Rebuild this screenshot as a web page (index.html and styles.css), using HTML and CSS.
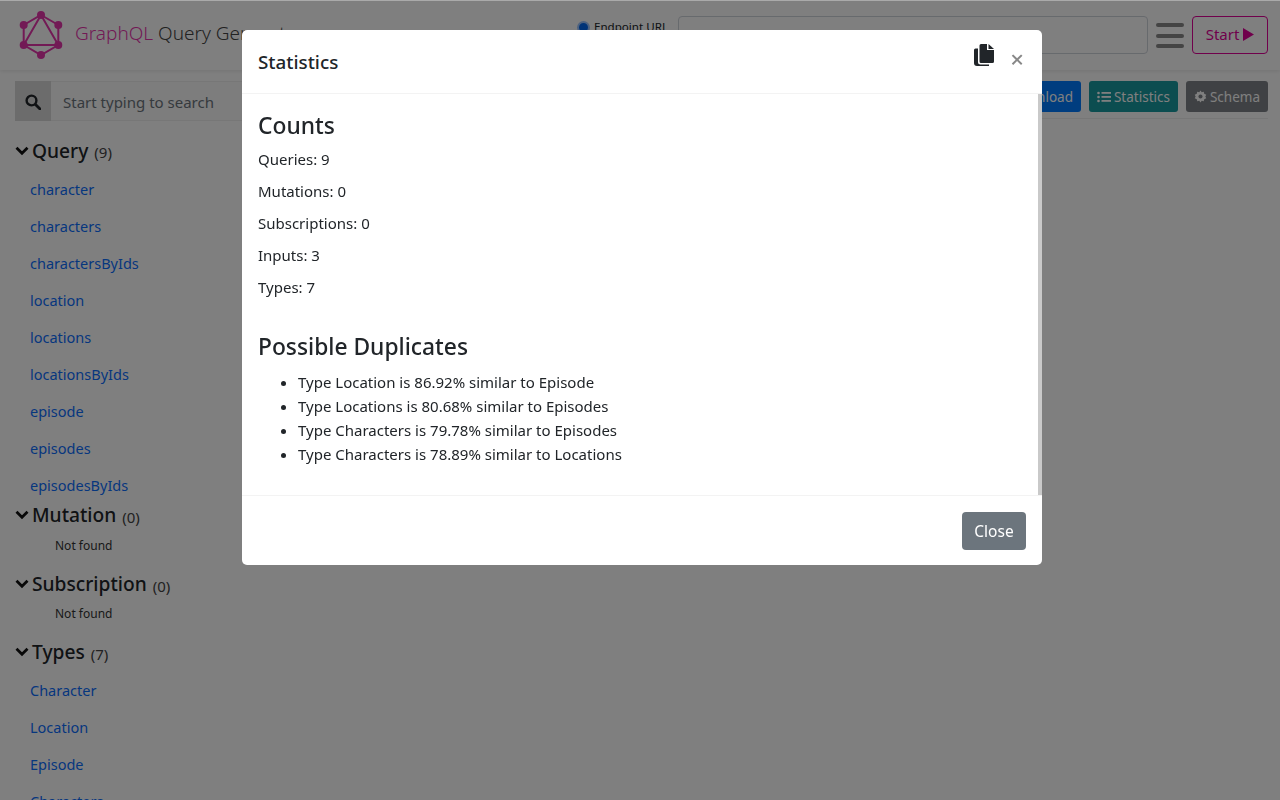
FILE: index.html
```html
<!DOCTYPE html>
<html lang="en">
<head>
<meta charset="utf-8">
<title>GraphQL Query Generator</title>
<link rel="stylesheet" href="styles.css">
</head>
<body>
<header class="navbar">
  <div class="brand">
    <svg class="logo" viewBox="0 0 48 48" width="48" height="48" aria-hidden="true">
      <g fill="none" stroke="#e535ab" stroke-width="2">
        <path d="M24 4 41.300 14V34L24 44 6.700 34V14Z"/>
        <path d="M24 4 41.300 34H6.700Z"/>
      </g>
      <g fill="#e535ab">
        <circle cx="24" cy="4" r="4"/><circle cx="41.300" cy="14" r="4"/><circle cx="41.300" cy="34" r="4"/>
        <circle cx="24" cy="44" r="4"/><circle cx="6.700" cy="34" r="4"/><circle cx="6.700" cy="14" r="4"/>
      </g>
    </svg>
    <span class="brand-text"><span class="brand-pink">GraphQL</span> Query Generator</span>
  </div>
  <div class="endpoint">
    <label class="radio-label"><span class="radio"></span>Endpoint URL</label>
    <div class="url-input"></div>
    <div class="burger"><i></i><i></i><i></i></div>
    <div class="start">Start
      <svg viewBox="0 0 12 14" width="11" height="13" aria-hidden="true"><path d="M0 0 12 7 0 14Z" fill="#e10098"/></svg>
    </div>
  </div>
</header>
<div class="toolbar">
  <div class="search">
    <span class="search-btn">
      <svg viewBox="0 0 16 16" width="16" height="16" aria-hidden="true"><circle cx="6.500" cy="6.500" r="4.900" fill="none" stroke="#212529" stroke-width="2.400"/><path d="M10.500 10.500 15 15" stroke="#212529" stroke-width="2.800" stroke-linecap="round"/></svg>
    </span>
    <span class="search-text">Start typing to search</span>
  </div>
  <div class="actions">
    <span class="btn btn-blue">Download</span>
    <span class="btn btn-teal">
      <svg viewBox="0 0 14 14" width="14" height="14" aria-hidden="true"><g fill="#fff"><circle cx="1.500" cy="3" r="1.300"/><circle cx="1.500" cy="7" r="1.300"/><circle cx="1.500" cy="11" r="1.300"/><rect x="4.500" y="2" width="9.500" height="1.800"/><rect x="4.500" y="6" width="9.500" height="1.800"/><rect x="4.500" y="10" width="9.500" height="1.800"/></g></svg>
      Statistics</span>
    <span class="btn btn-gray">
      <svg viewBox="0 0 14 14" width="13" height="13" aria-hidden="true"><path d="M7 .5 8.300 2.300 10.500 1.900 11 4.100 13.200 5 12.200 7 13.200 9 11 9.900 10.500 12.100 8.300 11.700 7 13.500 5.700 11.700 3.500 12.100 3 9.900 .8 9 1.800 7 .8 5 3 4.100 3.500 1.900 5.700 2.300Z" fill="#fff"/><circle cx="7" cy="7" r="2.200" fill="#7f8388"/></svg>
      Schema</span>
  </div>
</div>
<nav class="sidebar">
  <section class="group">
    <h3 class="group-title"><svg class="chev" viewBox="0 0 14 10" aria-hidden="true"><path d="M1.500 1.800 7 7.300 12.500 1.800" fill="none" stroke="#111" stroke-width="2.800"/></svg>Query <small>(9)</small></h3>
    <ul class="links tight">
      <li>character</li><li>characters</li><li>charactersByIds</li><li>location</li><li>locations</li><li>locationsByIds</li><li>episode</li><li>episodes</li><li>episodesByIds</li>
    </ul>
  </section>
  <section class="group g-mut">
    <h3 class="group-title"><svg class="chev" viewBox="0 0 14 10" aria-hidden="true"><path d="M1.500 1.800 7 7.300 12.500 1.800" fill="none" stroke="#111" stroke-width="2.800"/></svg>Mutation <small>(0)</small></h3>
    <p class="none">Not found</p>
  </section>
  <section class="group g-sub">
    <h3 class="group-title"><svg class="chev" viewBox="0 0 14 10" aria-hidden="true"><path d="M1.500 1.800 7 7.300 12.500 1.800" fill="none" stroke="#111" stroke-width="2.800"/></svg>Subscription <small>(0)</small></h3>
    <p class="none">Not found</p>
  </section>
  <section class="group g-types">
    <h3 class="group-title"><svg class="chev" viewBox="0 0 14 10" aria-hidden="true"><path d="M1.500 1.800 7 7.300 12.500 1.800" fill="none" stroke="#111" stroke-width="2.800"/></svg>Types <small>(7)</small></h3>
    <ul class="links">
      <li>Character</li><li>Location</li><li>Episode</li><li>Characters</li>
    </ul>
  </section>
</nav>
<div class="backdrop"></div>
<div class="modal" role="dialog">
  <div class="modal-header">
    <h5 class="modal-title">Statistics</h5>
    <svg class="copy" viewBox="0 0 20 22" width="20" height="22" aria-hidden="true">
      <path d="M7 0H13V6H20V17.500A1.500 1.500 0 0 1 18.500 19H7A1.500 1.500 0 0 1 5.500 17.500V1.500A1.500 1.500 0 0 1 7 0Z" fill="#212529"/>
      <path d="M14.500 0 20 5H14.500Z" fill="#212529"/>
      <path d="M4 4.500V18A2.500 2.500 0 0 0 6.500 20.500H15V22H3A3 3 0 0 1 0 19V6A1.500 1.500 0 0 1 1.500 4.500Z" fill="#212529"/>
    </svg>
    <span class="close-x">×</span>
  </div>
  <div class="modal-body">
    <h4 class="heading">Counts</h4>
    <p class="count">Queries: 9</p>
    <p class="count">Mutations: 0</p>
    <p class="count">Subscriptions: 0</p>
    <p class="count">Inputs: 3</p>
    <p class="count">Types: 7</p>
    <h4 class="heading dup">Possible Duplicates</h4>
    <ul class="dups">
      <li>Type Location is 86.92% similar to Episode</li>
      <li>Type Locations is 80.68% similar to Episodes</li>
      <li>Type Characters is 79.78% similar to Episodes</li>
      <li>Type Characters is 78.89% similar to Locations</li>
    </ul>
  </div>
  <div class="modal-footer"><span class="close-btn">Close</span></div>
</div>
</body>
</html>
```
FILE: styles.css
```css
* { box-sizing: border-box; }
html, body { height: 100%; }
body {
  margin: 0;
  height: 800px;
  overflow: hidden;
  background: #fff;
  color: #212529;
  font-family: "Noto Sans", "Open Sans", sans-serif;
  font-size: 15px;
  line-height: 24px;
}
.navbar {
  height: 70px;
  display: flex;
  align-items: center;
  justify-content: space-between;
  padding: 0 12px 0 17px;
  box-shadow: 0 1px 4px rgba(0,0,0,.1);
}
.brand { display: flex; align-items: center; gap: 10px; }
.logo { display: block; }
.brand-text { font-size: 19px; font-weight: 300; color: #444; margin-bottom: 4px; }
.brand-pink { color: #e535ab; }
.endpoint { display: flex; align-items: center; }
.radio-label { display: flex; align-items: center; gap: 4px; font-size: 11.600px; margin-right: 10px; margin-bottom: 16px; line-height: 16px; }
.radio { width: 13px; height: 13px; border-radius: 50%; border: 2px solid #9cc4ff; background: #0066ee; }
.url-input { width: 470px; height: 38px; border: 1px solid #ced4da; border-radius: 4px; background: #fff; margin-right: 8px; }
.burger { width: 28px; display: flex; flex-direction: column; gap: 6.500px; margin-right: 8px; padding-top: 1px; }
.burger i { display: block; height: 4px; border-radius: 2px; background: #888; }
.start { width: 76px; height: 38px; border: 1px solid #e10098; border-radius: 4px; color: #e10098; display: flex; align-items: center; justify-content: center; gap: 4px; font-size: 15px; padding-bottom: 2px; }
.toolbar { height: 40px; margin: 11px 12px 0 15px; display: flex; justify-content: space-between; align-items: flex-start; }
.search { display: flex; height: 40px; width: 600px; background: #fafafa; border: 1px solid #eee; }
.search-btn { width: 36px; margin: -1px 0 -1px -1px; padding-top: 2px; background: #d8d8d8; display: flex; align-items: center; justify-content: center; }
.search-text { padding-left: 12px; color: #6c757d; font-size: 15px; line-height: 40px; }
.actions { display: flex; gap: 8px; width: 500px; height: 38px; justify-content: flex-end; align-items: flex-start; border-bottom: 1px solid #eee; }
.btn { height: 31px; padding: 0 8px; border-radius: 3px; color: #fff; font-size: 13.500px; display: flex; align-items: center; gap: 3px; }
.btn-blue { background: #007bff; }
.btn-teal { background: #189aa0; }
.btn-gray { background: #7f8388; }
.sidebar { padding: 0 0 0 15px; }
.group-title { margin: 0; font-size: 19.200px; font-weight: 500; line-height: 28px; display: flex; align-items: center; white-space: pre; color: #212529; }
.group-title small { font-size: 15px; font-weight: 400; color: #444; margin-left: 1px; padding-top: 3px; }
.chev { width: 14px; height: 10px; margin-right: 3px; }
.group { margin-top: 14px; }
.links { list-style: none; margin: 0; padding: 0 0 0 15px; color: #0d6efd; font-size: 14.500px; }
.links li { height: 37px; line-height: 37px; }
.tight { margin-top: 5px; }
.g-mut { margin-top: -4.500px; }
.g-sub { margin-top: 14px; }
.g-types { margin-top: 14px; }
.g-types .links { margin-top: 4px; }
.none { margin: 6px 0 0 40px; font-size: 12px; line-height: 18px; color: #333; }
.g-sub .none { margin-top: 5px; }
.backdrop { position: fixed; inset: 0; background: rgba(0,0,0,.5); background-clip: padding-box; border-top: 1px solid #aaa; }
.modal {
  position: fixed;
  left: 241.500px;
  top: 30px;
  width: 800px;
  height: 535px;
  background: #fff;
  border-radius: 5px;
  display: flex;
  flex-direction: column;
}
.modal-header { height: 64px; flex: none; display: flex; align-items: center; padding: 0 16.500px; border-bottom: 1px solid #f3f3f3; }
.modal-title { margin: 0; font-size: 18.800px; font-weight: 500; flex: 1; }
.copy { margin: -14px 0 0; }
.close-x { font-size: 24px; font-weight: 500; color: #888; margin: 0 1px 5px 16px; line-height: 24px; }
.modal-body { flex: 1; padding: 17px 16.500px 16px; border-right: 4px solid #c9c9c9; font-size: 15px; }
.heading { margin: 0 0 6px; font-size: 22.800px; font-weight: 500; line-height: 30px; }
.count { margin: 0 0 8px; }
.dup { margin-top: 33px; margin-bottom: 8px; }
.dups { margin: 0; padding-left: 40px; }
.modal-footer { height: 70px; flex: none; border-top: 1px solid #f3f3f3; display: flex; align-items: center; justify-content: flex-end; padding: 0 15.500px; }
.close-btn { width: 64px; height: 38px; border-radius: 4px; background: #6c757d; color: #fff; font-size: 15.500px; display: flex; align-items: center; justify-content: center; }
```
